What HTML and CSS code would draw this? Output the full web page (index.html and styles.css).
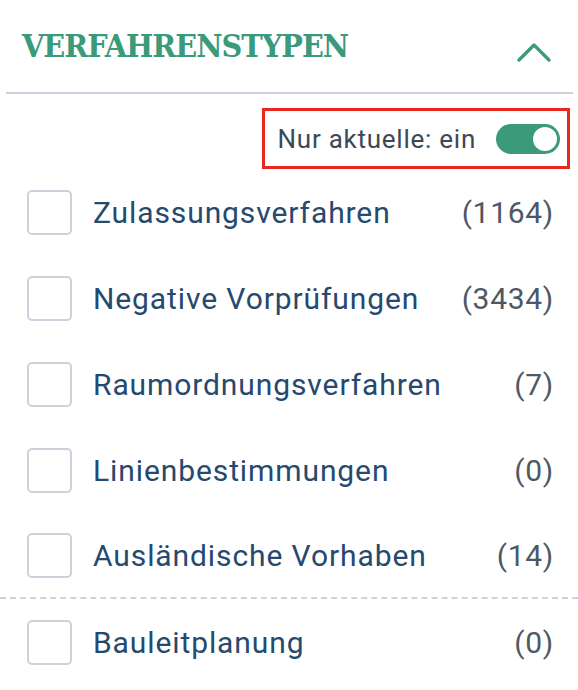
FILE: index.html
```html
<!DOCTYPE html>
<html lang="de">
<head>
<meta charset="utf-8">
<link rel="stylesheet" href="styles.css">
</head>
<body>
<div class="panel">
  <div class="header">
    <h2 class="title">VERFAHRENSTYPEN</h2>
    <svg class="chevron" width="34" height="20" viewBox="0 0 34 20"><polyline points="2,18 17,3 32,18" fill="none" stroke="#3a9a7a" stroke-width="3.2" stroke-linecap="round" stroke-linejoin="round"/></svg>
  </div>
  <div class="toggle-row">
    <div class="toggle-box">
      <span class="toggle-label">Nur aktuelle: ein</span>
      <span class="switch"><span class="knob"></span></span>
    </div>
  </div>
  <ul class="list">
    <li class="row"><span class="check"></span><span class="label">Zulassungsverfahren</span><span class="count">(1164)</span></li>
    <li class="row"><span class="check"></span><span class="label">Negative Vorprüfungen</span><span class="count">(3434)</span></li>
    <li class="row"><span class="check"></span><span class="label">Raumordnungsverfahren</span><span class="count">(7)</span></li>
    <li class="row"><span class="check"></span><span class="label">Linienbestimmungen</span><span class="count">(0)</span></li>
    <li class="row sep"><span class="check"></span><span class="label">Ausländische Vorhaben</span><span class="count">(14)</span></li>
    <li class="row"><span class="check"></span><span class="label">Bauleitplanung</span><span class="count">(0)</span></li>
  </ul>
</div>
</body>
</html>
```
FILE: styles.css
```css
html, body {
  margin: 0;
  padding: 0;
  background: #ffffff;
}
body {
  font-family: Roboto, "Liberation Sans", sans-serif;
}
.panel {
  width: 578px;
}
.header {
  display: flex;
  justify-content: space-between;
  align-items: center;
  height: 94px;
  margin: 0 5px 0 6px;
  padding: 0 22px 0 16px;
  border-bottom: 2px solid #c9d0dc;
  box-sizing: border-box;
}
.title {
  margin: 0;
  font-family: "DejaVu Serif Condensed", "DejaVu Serif", "Liberation Serif", serif;
  font-stretch: condensed;
  font-weight: bold;
  font-size: 32px;
  color: #3a9a7a;
  letter-spacing: -1px;
}
.chevron {
  display: block;
  margin-top: 12px;
}
.toggle-row {
  display: flex;
  justify-content: flex-end;
  padding: 14px 8px 0 0;
}
.toggle-box {
  display: flex;
  align-items: center;
  gap: 20px;
  height: 61px;
  box-sizing: border-box;
  border: 3px solid #e8271d;
  padding: 0 7px 0 13px;
}
.toggle-label {
  font-size: 26px;
  letter-spacing: 0.75px;
  color: #3b4858;
}
.switch {
  display: flex;
  align-items: center;
  justify-content: flex-end;
  width: 64px;
  height: 30px;
  border-radius: 15px;
  background: #3a9a7a;
  padding: 0 3px;
  box-sizing: border-box;
}
.knob {
  width: 24px;
  height: 24px;
  border-radius: 50%;
  background: #ffffff;
}
.list {
  list-style: none;
  margin: 0;
  padding: 0;
}
.row {
  display: flex;
  align-items: center;
  height: 86px;
  padding: 0 24px 0 27px;
  box-sizing: border-box;
}
.row.sep {
  border-bottom: 2px dashed #cfd3d8;
}
.check {
  width: 45px;
  height: 45px;
  box-sizing: border-box;
  border: 2px solid #cbd2dc;
  border-radius: 5px;
  flex: none;
}
.label {
  flex: 1;
  margin-left: 21px;
  font-size: 30px;
  letter-spacing: 0.9px;
  color: #26496e;
}
.count {
  font-size: 30px;
  letter-spacing: 0.7px;
  color: #4d5866;
}
```
